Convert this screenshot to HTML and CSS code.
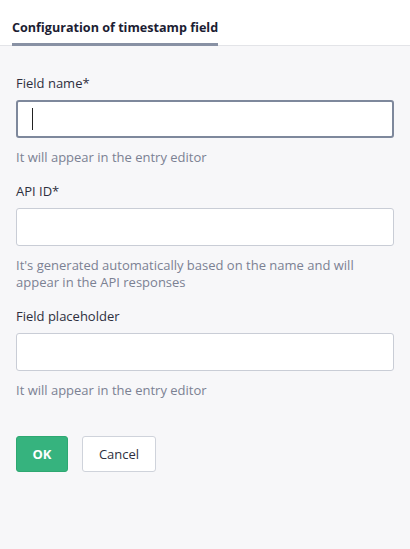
FILE: index.html
```html
<!DOCTYPE html>
<html>
<head>
<meta charset="utf-8">
<link rel="stylesheet" href="styles.css">
</head>
<body>
<div class="header">
  <div class="tab">Configuration of timestamp field</div>
</div>
<form class="form">
  <div class="field">
    <label class="label">Field name*</label>
    <div class="input focused"><span class="caret"></span></div>
    <div class="help">It will appear in the entry editor</div>
  </div>
  <div class="field">
    <label class="label">API ID*</label>
    <div class="input"></div>
    <div class="help">It's generated automatically based on the name and will appear in the API responses</div>
  </div>
  <div class="field">
    <label class="label">Field placeholder</label>
    <div class="input"></div>
    <div class="help">It will appear in the entry editor</div>
  </div>
  <div class="actions">
    <button type="button" class="btn btn-ok">OK</button>
    <button type="button" class="btn btn-cancel">Cancel</button>
  </div>
</form>
</body>
</html>
```
FILE: styles.css
```css
* { box-sizing: border-box; }
html, body {
  margin: 0;
  height: 100%;
}
body {
  background: #f7f7f9;
  font-family: "Open Sans", "Noto Sans", sans-serif;
  color: #2e2f3e;
}
.header {
  background: #fff;
  height: 46px;
  border-bottom: 1px solid #e3e4e8;
  display: flex;
  align-items: flex-end;
  padding: 0 12px;
}
.tab {
  font-size: 12.6px;
  font-weight: 700;
  color: #1c1d33;
  padding-bottom: 6px;
  border-bottom: 3px solid #8891a4;
  line-height: 18px;
  margin-bottom: -1px;
}
.form {
  padding: 28px 16px 0;
  display: flex;
  flex-direction: column;
}
.field {
  display: flex;
  flex-direction: column;
  margin-bottom: 16px;
}
.label {
  font-size: 13px;
  line-height: 18px;
  color: #2e2f3e;
  margin-bottom: 8px;
}
.input {
  height: 38px;
  background: #fff;
  border: 1px solid #c9cdd6;
  border-radius: 3px;
  display: flex;
  align-items: center;
  padding-left: 15px;
}
.input.focused {
  border: 2px solid #7e889c;
  padding-left: 14px;
}
.caret {
  width: 1px;
  height: 22px;
  background: #222;
}
.help {
  margin-top: 11px;
  font-size: 13px;
  line-height: 17px;
  color: #7b8193;
  padding-right: 30px;
}
.actions {
  display: flex;
  gap: 14px;
  margin-top: 21px;
}
.btn {
  font-family: inherit;
  height: 36px;
  border-radius: 3px;
  font-size: 13px;
  padding: 0;
  cursor: pointer;
}
.btn-ok {
  width: 52px;
  background: #36b37e;
  border: 1px solid #2ea872;
  color: #fff;
  font-weight: 700;
}
.btn-cancel {
  width: 74px;
  background: #fff;
  border: 1px solid #cfd3db;
  color: #2e2f3e;
}
```
